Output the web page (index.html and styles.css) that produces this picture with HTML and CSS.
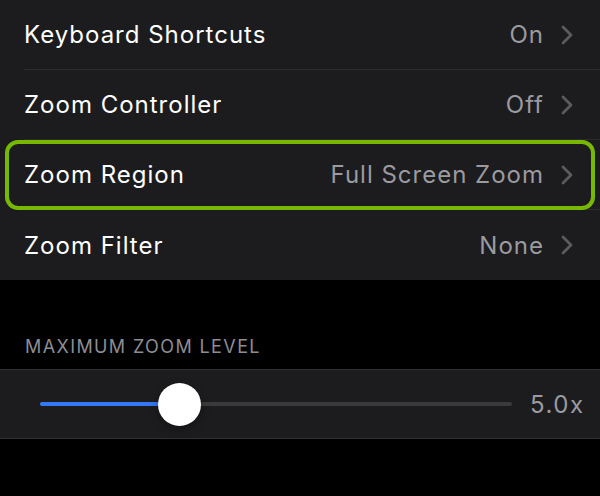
FILE: index.html
```html
<!DOCTYPE html>
<html lang="en">
<head>
<meta charset="utf-8">
<title>Zoom Settings</title>
<link rel="stylesheet" href="styles.css">
</head>
<body>
<div class="screen">
  <div class="group">
    <div class="row">
      <div class="row-inner">
        <span class="label">Keyboard Shortcuts</span>
        <span class="value">On</span>
        <svg class="chev" width="12" height="20" viewBox="0 0 12 20"><path d="M2 2 L10 10 L2 18" fill="none" stroke="#5b5b5f" stroke-width="2.8" stroke-linecap="round" stroke-linejoin="round"/></svg>
      </div>
    </div>
    <div class="row">
      <div class="row-inner">
        <span class="label">Zoom Controller</span>
        <span class="value">Off</span>
        <svg class="chev" width="12" height="20" viewBox="0 0 12 20"><path d="M2 2 L10 10 L2 18" fill="none" stroke="#5b5b5f" stroke-width="2.8" stroke-linecap="round" stroke-linejoin="round"/></svg>
      </div>
    </div>
    <div class="row selected">
      <div class="row-inner">
        <span class="label">Zoom Region</span>
        <span class="value">Full Screen Zoom</span>
        <svg class="chev" width="12" height="20" viewBox="0 0 12 20"><path d="M2 2 L10 10 L2 18" fill="none" stroke="#5b5b5f" stroke-width="2.8" stroke-linecap="round" stroke-linejoin="round"/></svg>
      </div>
    </div>
    <div class="row last">
      <div class="row-inner">
        <span class="label">Zoom Filter</span>
        <span class="value">None</span>
        <svg class="chev" width="12" height="20" viewBox="0 0 12 20"><path d="M2 2 L10 10 L2 18" fill="none" stroke="#5b5b5f" stroke-width="2.8" stroke-linecap="round" stroke-linejoin="round"/></svg>
      </div>
    </div>
  </div>

  <div class="section-header">MAXIMUM ZOOM LEVEL</div>

  <div class="slider-group">
    <div class="slider">
      <div class="track">
        <div class="fill" style="width: 29.5%"></div>
        <div class="thumb" style="left: 29.5%"></div>
      </div>
    </div>
    <span class="slider-value">5.0x</span>
  </div>
</div>
</body>
</html>
```

FILE: styles.css
```css
* {
  box-sizing: border-box;
}

html, body {
  margin: 0;
  padding: 0;
  background: #000;
}

body {
  font-family: Inter, "Noto Sans", "Liberation Sans", sans-serif;
  -webkit-font-smoothing: antialiased;
}

.screen {
  width: 600px;
  height: 496px;
  overflow: hidden;
  background: #000;
}

.group {
  background: #1c1c1e;
}

.row {
  position: relative;
  height: 70px;
  padding-left: 24px;
}

.row-inner {
  height: 70px;
  display: flex;
  align-items: center;
  padding-right: 27px;
  border-bottom: 1px solid #2c2c2e;
}

.row.last .row-inner {
  border-bottom: none;
}

.row.selected::after {
  content: "";
  position: absolute;
  left: 5px;
  right: 5px;
  top: 0;
  bottom: 0;
  border: 4px solid #77b900;
  border-radius: 13px;
  pointer-events: none;
}

.label {
  flex: 1;
  color: #ffffff;
  font-size: 24px;
  letter-spacing: 1px;
}

.value {
  color: #9a9aa0;
  font-size: 24px;
  letter-spacing: 1px;
  margin-right: 17px;
}

.chev {
  display: block;
  flex: none;
}

.section-header {
  padding: 56px 0 0 25px;
  height: 89px;
  color: #8d8d93;
  font-size: 18px;
  letter-spacing: 1.4px;
}

.slider-group {
  display: flex;
  align-items: center;
  height: 70px;
  background: #1c1c1e;
  border-top: 1px solid #323234;
  border-bottom: 1px solid #323234;
  padding: 0 10px 0 40px;
}

.slider {
  flex: none;
  width: 472px;
  margin-right: 18px;
}

.track {
  position: relative;
  height: 4px;
  border-radius: 2px;
  background: #3a3a3c;
}

.fill {
  height: 4px;
  border-radius: 2px;
  background: #3478f6;
}

.thumb {
  position: absolute;
  top: 50%;
  width: 43px;
  height: 43px;
  margin: -21.5px 0 0 -21.5px;
  border-radius: 50%;
  background: #ffffff;
  box-shadow: 0 3px 8px rgba(0, 0, 0, 0.35), 0 0 1px rgba(0, 0, 0, 0.2);
}

.slider-value {
  color: #9a9aa0;
  font-size: 24px;
  letter-spacing: 1.5px;
}
```
